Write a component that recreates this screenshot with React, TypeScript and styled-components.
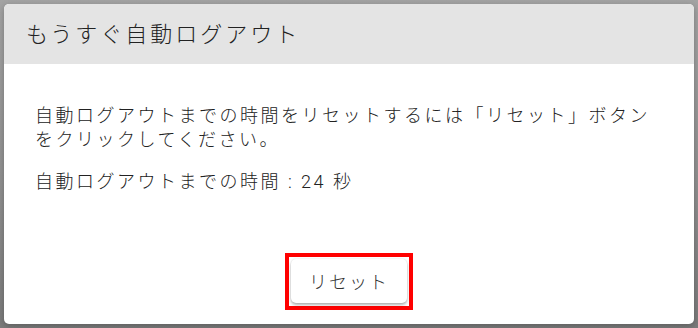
import React from "react";
import styled, { createGlobalStyle } from "styled-components";

const GlobalStyle = createGlobalStyle`
  html, body {
    margin: 0;
    padding: 0;
    height: 100%;
  }
  body {
    font-family: Roboto, "Noto Sans CJK JP", sans-serif;
    color: #333;
  }
  #root {
    height: 100%;
  }
`;

const Overlay = styled.div`
  box-sizing: border-box;
  width: 698px;
  height: 328px;
  padding: 4px;
  background: linear-gradient(180deg, #a3a3a3 0%, #939393 50%, #7b7b7b 100%);
`;

const Dialog = styled.div`
  height: 320px;
  display: flex;
  flex-direction: column;
  background: #fff;
  border-radius: 5px;
  overflow: hidden;
  box-shadow: 0 2px 6px rgba(0, 0, 0, 0.25);
`;

const Header = styled.div`
  box-sizing: border-box;
  height: 60px;
  flex: none;
  display: flex;
  align-items: center;
  padding: 0 0 5px 22px;
  background: #e4e4e4;
  font-size: 22px;
  letter-spacing: 3px;
  font-weight: 300;
  color: #222;
`;

const Body = styled.div`
  flex: 1;
  padding: 40px 31px 0;
  font-size: 18px;
  letter-spacing: 2.5px;
  line-height: 24px;
  font-weight: 300;
  color: #222;
`;

const Paragraph = styled.p<{ $gap?: number }>`
  margin: 0 0 ${(p) => p.$gap ?? 0}px;
`;

const Footer = styled.div`
  display: flex;
  justify-content: center;
  padding-bottom: 14px;
`;

const Highlight = styled.div`
  border: 4px solid #ff0000;
  padding: 2px 2px 3px 2px;
`;

const ResetButton = styled.button`
  width: 116px;
  height: 44px;
  border: none;
  border-radius: 5px;
  background: #fff;
  box-shadow: 0 2px 3px rgba(0, 0, 0, 0.3), 0 0 2px rgba(0, 0, 0, 0.1);
  font-family: Roboto, "Noto Sans CJK JP", sans-serif;
  font-size: 18px;
  letter-spacing: 2px;
  font-weight: 300;
  color: #333;
  cursor: pointer;
`;

export default function App() {
  return (
    <>
      <GlobalStyle />
      <Overlay>
        <Dialog>
          <Header>もうすぐ自動ログアウト</Header>
          <Body>
            <Paragraph $gap={18}>
              自動ログアウトまでの時間をリセットするには「リセット」ボタン
              <br />
              をクリックしてください。
            </Paragraph>
            <Paragraph>自動ログアウトまでの時間 : 24 秒</Paragraph>
          </Body>
          <Footer>
            <Highlight>
              <ResetButton>リセット</ResetButton>
            </Highlight>
          </Footer>
        </Dialog>
      </Overlay>
    </>
  );
}
